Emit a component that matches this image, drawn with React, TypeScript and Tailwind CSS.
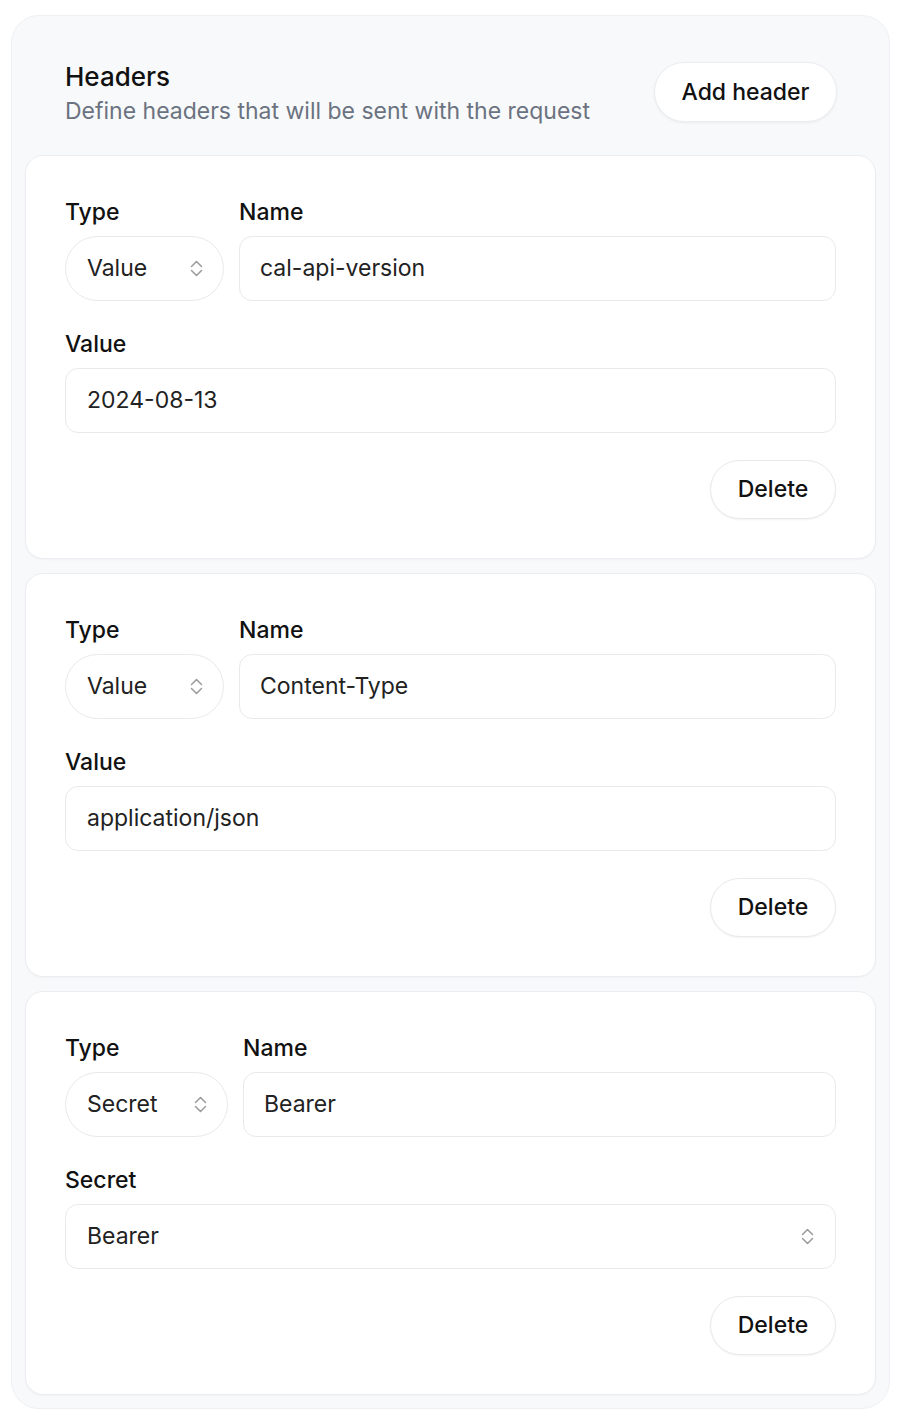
type Header = {
    type: "Value" | "Secret";
    name: string;
    value: string;
};

const headers: Header[] = [
    { type: "Value", name: "cal-api-version", value: "2024-08-13" },
    { type: "Value", name: "Content-Type", value: "application/json" },
    { type: "Secret", name: "Bearer", value: "Bearer" },
];

function UpDown() {
    return (
        <svg width="13" height="17" viewBox="0 0 13 17" fill="none" stroke="#9b9b9b" strokeWidth={1.5} strokeLinecap="round" strokeLinejoin="round">
            <path d="M1.5 6.5 6.5 1.5l5 5" />
            <path d="M1.5 10.5l5 5 5-5" />
        </svg>
    );
}

function HeaderCard({ header }: { header: Header }) {
    const isSecret = header.type === "Secret";
    return (
        <div className="bg-white border border-[#ebedf0] rounded-[18px] px-[39px] pt-[41px] pb-[39px] shadow-[0_1px_2px_rgba(0,0,0,0.03)]">
            <div className="flex gap-[15px]">
                <div className="flex flex-col">
                    <label className="text-[23px] font-medium text-[#111] leading-[30px]">Type</label>
                    <div className={`mt-[9px] h-[65px] ${isSecret ? "w-[163px]" : "w-[159px]"} rounded-full border border-[#e8e9ec] flex items-center justify-between pl-[21px] pr-[20px] text-[23px] text-[#222]`}>
                        <span>{header.type}</span>
                        <UpDown />
                    </div>
                </div>
                <div className="flex flex-col flex-1">
                    <label className="text-[23px] font-medium text-[#111] leading-[30px]">Name</label>
                    <div className="mt-[9px] h-[65px] rounded-[13px] border border-[#e8e9ec] flex items-center px-[20px] text-[23px] text-[#222]">
                        {header.name}
                    </div>
                </div>
            </div>
            <div className="mt-[28px] flex flex-col">
                <label className="text-[23px] font-medium text-[#111] leading-[30px]">{isSecret ? "Secret" : "Value"}</label>
                <div className="mt-[9px] h-[65px] rounded-[13px] border border-[#e8e9ec] flex items-center justify-between pl-[21px] pr-[21px] text-[23px] text-[#222]">
                    <span>{header.value}</span>
                    {isSecret && <UpDown />}
                </div>
            </div>
            <div className="mt-[27px] flex justify-end">
                <button className="h-[59px] w-[126px] rounded-full border border-[#e8e9ec] bg-white text-[23px] font-medium text-[#111] shadow-[0_1px_2px_rgba(0,0,0,0.05)]">
                    Delete
                </button>
            </div>
        </div>
    );
}

export default function App() {
    return (
        <div className="w-[908px] min-h-[1420px] bg-white pt-[15px] px-[11px]" style={{ fontFamily: "Inter, 'Noto Sans', sans-serif" }}>
            <div className="w-[879px] bg-[#f8f9fb] border border-[#eef0f3] rounded-[28px] px-[13px] pt-[44px] pb-[13px]">
                <div className="flex items-start justify-between pl-[40px] pr-[39px]">
                    <div>
                        <h2 className="text-[26px] font-medium text-[#111] leading-[34px]">Headers</h2>
                        <p className="mt-[2px] text-[23px] text-[#6b7280] leading-[30px]">Define headers that will be sent with the request</p>
                    </div>
                    <button className="mt-[2px] h-[60px] w-[183px] rounded-full border border-[#eceef1] bg-white text-[23px] font-medium text-[#111] shadow-[0_1px_3px_rgba(0,0,0,0.06)]">
                        Add header
                    </button>
                </div>
                <div className="mt-[29px] flex flex-col gap-[14px]">
                    {headers.map((h, i) => (
                        <HeaderCard key={i} header={h} />
                    ))}
                </div>
            </div>
        </div>
    );
}
